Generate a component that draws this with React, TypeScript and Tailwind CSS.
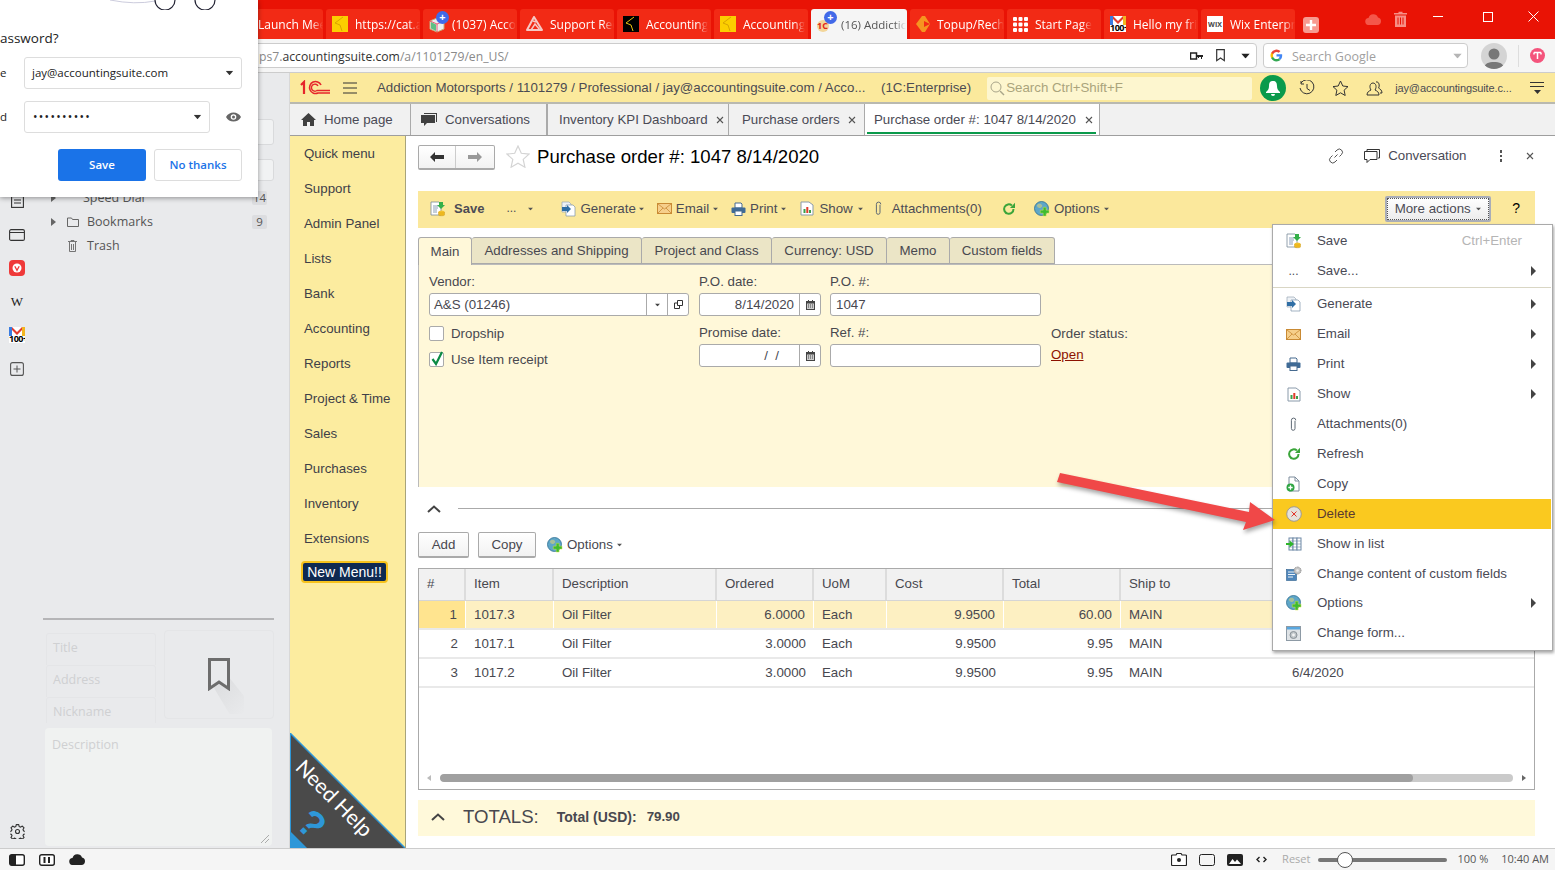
import React from "react";

const Tri = ({ c = "#555", cls = "" }: { c?: string; cls?: string }) => (
  <svg width="7" height="4" viewBox="0 0 7 4" className={cls}><path d="M0 0h7L3.5 4z" fill={c} /></svg>
);
const RTri = () => (
  <svg width="5" height="10" viewBox="0 0 5 10"><path d="M0 0l5 5-5 5z" fill="#444" /></svg>
);

const SaveIco = () => (
  <svg width="16" height="16" viewBox="0 0 16 16">
    <path d="M1 1h8l2 2v11H1z" fill="#fff" stroke="#7a8a9a" strokeWidth=".8" />
    <path d="M3 5h5M3 7h5M3 9h4M3 11h4" stroke="#6f88a8" strokeWidth=".8" />
    <path d="M9 1h4v3h2l-4 4-4-4h2z" fill="#35b04a" />
    <ellipse cx="11.5" cy="11" rx="3" ry="1.5" fill="#f2c230" />
    <path d="M8.5 11v3c0 1 6 1 6 0v-3" fill="#edb81f" stroke="#c4941a" strokeWidth=".4" />
  </svg>
);
const GenIco = () => (
  <svg width="16" height="16" viewBox="0 0 16 16">
    <path d="M1 1h7l2 2v8H1z" fill="#eef2f6" stroke="#9aa7b5" strokeWidth=".7" />
    <path d="M5 4h7l2 2v9H5z" fill="#fff" stroke="#7d93aa" strokeWidth=".7" />
    <path d="M1 6h5V4l4 4-4 4v-2H1z" fill="#2f6ea5" />
  </svg>
);
const MailIco = () => (
  <svg width="15" height="11" viewBox="0 0 15 11">
    <rect x=".5" y=".5" width="14" height="10" fill="#f6cf8b" stroke="#c98a34" />
    <path d="M1 1l6.5 5L14 1M1 10l5-5M14 10L9 5" stroke="#c98a34" strokeWidth=".8" fill="none" />
  </svg>
);
const PrintIco = () => (
  <svg width="15" height="14" viewBox="0 0 15 14">
    <path d="M4 1h6l1 1v4H4z" fill="#fff" stroke="#466a8f" />
    <rect x=".5" y="5.5" width="14" height="5.5" rx="1" fill="#3f6b96" />
    <rect x="4" y="9" width="7" height="4.5" fill="#fff" stroke="#466a8f" />
  </svg>
);
const ShowIco = () => (
  <svg width="14" height="15" viewBox="0 0 14 15">
    <path d="M1 1h8l4 3v10H1z" fill="#fff" stroke="#8a9aaa" />
    <rect x="3.5" y="8" width="2" height="4" fill="#3aa04a" />
    <rect x="6.3" y="6" width="2" height="6" fill="#e23b2a" />
    <rect x="9" y="9" width="2" height="3" fill="#3aa04a" />
  </svg>
);
const ClipIco = () => (
  <svg width="7" height="15" viewBox="0 0 7 15">
    <path d="M5.2 3.5v7.700a1.800 1.800 0 01-3.600 0V3a2.200 2.200 0 014.400 0" transform="translate(-.2 .3)" fill="none" stroke="#5f6a75" strokeWidth="1" />
  </svg>
);
const RefreshIco = () => (
  <svg width="14" height="14" viewBox="0 0 14 14">
    <path d="M11.5 7a4.700 4.700 0 11-1.600-3.500" fill="none" stroke="#3ba53a" strokeWidth="2" />
    <path d="M13 .8V6H8z" fill="#3ba53a" />
  </svg>
);
const GlobeIco = () => (
  <svg width="16" height="16" viewBox="0 0 16 16">
    <circle cx="7.5" cy="7.5" r="7" fill="#5ea6c8" stroke="#2f6f92" strokeWidth=".8" />
    <path d="M3 4c2-2 4-1 5 0s-1 3-2 3-3 0-3-3zM9 8c2 0 4 0 4 2s-3 3-4 2z" fill="#a7bf9a" />
    <path d="M10 7h3v3h3v3h-3v3h-3v-3H7v-3h3z" fill="#3dbb2f" stroke="#d8e44a" strokeWidth=".5" transform="translate(-.5 -.5) scale(.97)" />
  </svg>
);
const CopyIco = () => (
  <svg width="15" height="16" viewBox="0 0 15 16">
    <path d="M3 1h6l4 4v10H3z" fill="#fff" stroke="#7d8c9c" />
    <path d="M9 1v4h4" fill="none" stroke="#7d8c9c" />
    <circle cx="4.5" cy="11.5" r="4" fill="#2fa544" />
    <path d="M4.5 9.300v4.400M2.300 11.500h4.400" stroke="#fff" strokeWidth="1.300" />
  </svg>
);
const DelIco = () => (
  <svg width="16" height="16" viewBox="0 0 16 16">
    <circle cx="8" cy="8" r="7.300" fill="#e4e2dc" stroke="#a09a90" />
    <path d="M5.500 5.500l5 5m0-5l-5 5" stroke="#e2342a" strokeWidth="1" />
  </svg>
);
const ListIco = () => (
  <svg width="16" height="14" viewBox="0 0 16 14">
    <rect x="3" y="1" width="4" height="12" fill="#fff" stroke="#6d88a5" />
    <rect x="7" y="1" width="4" height="12" fill="#fff" stroke="#6d88a5" />
    <rect x="11" y="1" width="4" height="12" fill="#fff" stroke="#6d88a5" />
    <path d="M3 4h12M3 7h12M3 10h12" stroke="#6d88a5" strokeWidth=".6" />
    <path d="M0 6h3.500V3.500L8 7l-4.500 3.500V8H0z" fill="#2fb52a" />
  </svg>
);
const CfIco = () => (
  <svg width="16" height="15" viewBox="0 0 16 15">
    <rect x=".5" y="3.500" width="10" height="11" fill="#4f86bb" stroke="#2f5f8d" strokeWidth=".6" />
    <path d="M2 6h7M2 8.500h7M2 11h5" stroke="#fff" strokeWidth=".9" />
    <circle cx="11.500" cy="4.500" r="3.500" fill="#c5c5c5" stroke="#8a8a8a" strokeDasharray="1 .7" />
    <circle cx="11.500" cy="4.500" r="1.300" fill="#eee" />
  </svg>
);
const FormIco = () => (
  <svg width="15" height="15" viewBox="0 0 15 15">
    <rect x=".5" y=".5" width="14" height="14" fill="#dfe3e6" stroke="#8d9aa5" />
    <rect x="1" y="1" width="13" height="2.500" fill="#59a7df" />
    <circle cx="7.500" cy="9" r="3.500" fill="#bfc5c9" stroke="#8b9298" />
    <circle cx="7.500" cy="9" r="1.400" fill="#f3f3f3" />
  </svg>
);

const Badge = () => (
  <span className="absolute left-[7px] top-[-5px] w-[13px] h-[13px] rounded-full bg-[#4169e8] text-white text-[11px] leading-[12px] text-center font-bold">+</span>
);

const Fav = ({ kind }: { kind: string }) => {
  if (kind === "yellow" || kind === "black")
    return (
      <svg width="16" height="16" viewBox="0 0 16 16" className="shrink-0">
        <rect width="16" height="16" fill={kind === "yellow" ? "#fccf00" : "#000"} />
        <path d="M11 1L3 7l5 2 2 6" fill="none" stroke={kind === "yellow" ? "#d9a400" : "#e8c110"} strokeWidth="1" />
      </svg>
    );
  if (kind === "cube")
    return (
      <span className="relative inline-block w-[16px] h-[16px] shrink-0">
        <svg width="16" height="16" viewBox="0 0 16 16" className="mt-[1px]">
          <path d="M8 1l7 3v8l-7 3-7-3V4z" fill="#eee" stroke="#c9a87a" />
          <path d="M1 4l7 3 7-3M8 7v8" stroke="#e35" fill="none" strokeWidth=".8" />
          <path d="M2 5l5 2.500V14l-5-2.500z" fill="#5fbf83" />
        </svg>
        <Badge />
      </span>
    );
  if (kind === "support")
    return (
      <svg width="17" height="16" viewBox="0 0 17 16" className="shrink-0">
        <path d="M8 1l8 13H1z" fill="none" stroke="#f6c8c3" strokeWidth="2" strokeLinejoin="round" />
        <path d="M5 14l4-6 5 6M7 5l3 1" stroke="#f6c8c3" strokeWidth="1.500" fill="none" />
      </svg>
    );
  if (kind === "1c")
    return (
      <span className="relative inline-block w-[16px] h-[16px] shrink-0">
        <span className="absolute left-0 top-[4px] w-[12px] h-[12px] rounded-full bg-[#f3d69a]" />
        <span className="absolute left-0 top-[5px] text-[9px] font-bold text-[#e0281a] leading-none">1C</span>
        <Badge />
      </span>
    );
  if (kind === "top")
    return (
      <svg width="14" height="16" viewBox="0 0 14 16" className="shrink-0">
        <path d="M6 0h3l5 8-5 8H6L0 8z" fill="#f69420" />
        <path d="M14 8L8 5v6z" fill="#f22a15" />
      </svg>
    );
  if (kind === "grid")
    return (
      <svg width="15" height="15" viewBox="0 0 15 15" className="shrink-0">
        {[0, 5.500, 11].map((x) => [0, 5.500, 11].map((y) => <rect key={`${x}${y}`} x={x} y={y} width="4" height="4" rx="1" fill="#fff" />))}
      </svg>
    );
  if (kind === "gmail")
    return (
      <span className="relative inline-block w-[16px] h-[16px] bg-white shrink-0 overflow-hidden">
        <svg width="16" height="9" viewBox="0 0 16 9" className="absolute top-0 left-0">
          <rect width="3" height="9" fill="#3a7ce0" />
          <rect x="13" width="3" height="9" fill="#f2b61f" />
          <path d="M3 0l5 5 5-5v3L8 8 3 3z" fill="#e33b2e" />
        </svg>
        <span className="absolute left-0 top-[7px] text-[9px] font-bold text-black leading-none tracking-[-0.5px]">100+</span>
      </span>
    );
  return (
    <span className="inline-flex items-center justify-center w-[16px] h-[16px] bg-white text-[7px] font-bold text-[#444] shrink-0 leading-none">WIX</span>
  );
};

const tabs = [
  { k: "yellow", t: "Launch Mee" },
  { k: "yellow", t: "https://cat.a" },
  { k: "cube", t: "(1037) Acco" },
  { k: "support", t: "Support Rec" },
  { k: "black", t: "Accounting" },
  { k: "yellow", t: "Accounting" },
  { k: "1c", t: "(16) Addictic", active: true },
  { k: "top", t: "Topup/Rech" },
  { k: "grid", t: "Start Page" },
  { k: "gmail", t: "Hello my fri" },
  { k: "wix", t: "Wix Enterpr" },
];

const ChromeBar = () => (
  <div className="h-[39px] bg-[#e91305] flex items-end pl-[229px] shrink-0">
    <div className="flex gap-[3px]">
      {tabs.map((t, i) => (
        <div key={i} className={t.active
          ? "w-[96px] h-[30px] rounded-t-[3px] bg-[#f5f5f5] text-[#555] flex items-center pl-[6px] gap-[8px] text-[11.5px] overflow-hidden whitespace-nowrap"
          : "w-[94px] h-[30px] rounded-t-[3px] bg-[#f22a15] text-white flex items-center pl-[6px] gap-[7px] text-[12px] overflow-hidden whitespace-nowrap"}>
          <Fav kind={t.k} />
          <span className="pt-[2px] [mask-image:linear-gradient(90deg,#000_82%,transparent)] overflow-hidden">{t.t}</span>
        </div>
      ))}
    </div>
    <span className="ml-[8px] mb-[6px] w-[16px] h-[16px] rounded-[3px] bg-[#f79a90] text-white flex items-center justify-center">
      <svg width="10" height="10" viewBox="0 0 10 10"><path d="M5 0v10M0 5h10" stroke="#fff" strokeWidth="2.400" /></svg>
    </span>
    <div className="ml-[46px] mb-[10px] flex items-center h-[20px]">
      <svg width="16" height="11" viewBox="0 0 16 11"><path d="M4 11a3.500 3.500 0 01-.5-7A5 5 0 0113 3.500 3.800 3.800 0 0112.500 11z" fill="#f4574a" /></svg>
      <svg width="13" height="16" viewBox="0 0 13 16" className="ml-[13px]"><path d="M4.500 2V.8h4V2H13v1.500H0V2zM1 4.500h11V16H1z" fill="#f78f85" /><path d="M4 6.500v7M6.500 6.500v7M9 6.500v7" stroke="#e91305" /></svg>
    </div>
    <div className="ml-[26px] mb-[17px] flex items-center">
      <span className="w-[10px] h-[1px] bg-white" />
      <span className="ml-[40px] w-[10px] h-[10px] border border-white" />
      <svg width="11" height="11" viewBox="0 0 11 11" className="ml-[35px]"><path d="M.5.500l10 10m0-10l-10 10" stroke="#fff" /></svg>
    </div>
  </div>
);

const AddressBar = () => (
  <div className="h-[33px] bg-[#f5f5f5] flex items-center shrink-0">
    <div className="w-[1257px] h-[25px] bg-white border border-[#ccc] rounded-r-[4px] flex items-center pl-[258px] text-[12.2px] shrink-0">
      <span className="text-[#8a8a8a] pt-[4px]">ps7.</span>
      <span className="text-[#333] pt-[4px]">accountingsuite.com</span>
      <span className="text-[#8a8a8a] pt-[4px]">/a/1101279/en_US/</span>
      <div className="ml-auto flex items-center pr-[7px]">
        <svg width="13" height="8" viewBox="0 0 13 8"><rect x=".5" y="1" width="6" height="6" fill="#fff" stroke="#222" strokeWidth="1.500" /><path d="M7 3h6v2h-1v2h-1V5H9v1H8V5H7z" fill="#222" /></svg>
        <svg width="9" height="13" viewBox="0 0 9 13" className="ml-[13px]"><path d="M.7.700h7.600v11L4.500 9 .7 11.700z" fill="none" stroke="#333" strokeWidth="1.200" /></svg>
        <Tri c="#222" cls="ml-[17px] scale-125" />
      </div>
    </div>
    <div className="ml-[6px] w-[205px] h-[25px] bg-white border border-[#ccc] rounded-[4px] flex items-center pl-[6px] text-[12.5px] text-[#9f9f9f] shrink-0">
      <svg width="13" height="13" viewBox="0 0 48 48">
        <path fill="#4285F4" d="M45 24c0-1.600-.1-3-.4-4.500H24v8.500h11.800c-.5 2.700-2 5-4.400 6.600l7 5.400C42.500 36 45 30.500 45 24z" />
        <path fill="#34A853" d="M24 46c5.900 0 10.900-2 14.500-5.400l-7-5.400c-2 1.300-4.500 2.100-7.500 2.100-5.700 0-10.600-3.900-12.300-9H4.400v5.600C8 41 15.500 46 24 46z" />
        <path fill="#FBBC05" d="M11.700 28.300c-.9-2.700-.9-5.800 0-8.500v-5.600H4.400a22 22 0 000 19.700z" />
        <path fill="#EA4335" d="M24 10.700c3.200 0 6.100 1.100 8.400 3.300l6.200-6.200A22 22 0 004.400 14.200l7.300 5.600c1.700-5.100 6.600-9.100 12.300-9.100z" />
      </svg>
      <span className="ml-[9px] pt-[4px]">Search Google</span>
      <Tri c="#b5b5b5" cls="ml-auto mr-[6px] scale-125" />
    </div>
    <div className="ml-[13px] w-[26px] h-[26px] rounded-full bg-[#d4d4d4] overflow-hidden flex items-end justify-center shrink-0">
      <svg width="20" height="22" viewBox="0 0 20 22"><circle cx="10" cy="7" r="5.500" fill="#777" /><path d="M0 22c0-6 5-7 10-7s10 1 10 7z" fill="#777" /></svg>
    </div>
    <span className="ml-[11px] w-[1px] h-[22px] bg-[#ddd]" />
    <span className="ml-[11px] w-[15px] h-[15px] rounded-full bg-[#f4547c] flex items-center justify-center">
      <svg width="9" height="9" viewBox="0 0 9 9"><path d="M1 1.500h7M4.500 1.500V8M1 1.500v2M8 1.500v2" stroke="#fff" strokeWidth="1.500" fill="none" /></svg>
    </span>
  </div>
);

const RailSlot = ({ children }: { children: React.ReactNode }) => (
  <div className="h-[33.4px] flex items-center justify-center">{children}</div>
);

const FieldCell = ({ t }: { t: string }) => (
  <div className="h-[32px] border-t border-l border-r border-[#e4e5e7] rounded-t-[3px] pl-[6px] pt-[5px] text-[12.5px] text-[#cfd0d2] last:h-[26px] last:overflow-hidden">{t}</div>
);

const RTriSm = () => (
  <svg width="5" height="8" viewBox="0 0 5 8" className="shrink-0"><path d="M0 0l5 4-5 4z" fill="#666" /></svg>
);

const LeftPanel = () => (
  <div className="w-[290px] shrink-0 bg-[#e9eaec] border-r border-[#d8d8d8] flex font-['Open_Sans',sans-serif]">
    <div className="w-[34px] flex flex-col pt-[112px] pb-[9px]">
      <RailSlot>
        <svg width="13" height="12" viewBox="0 0 13 12"><rect x=".6" y=".6" width="11.800" height="10.800" fill="none" stroke="#333" strokeWidth="1.100" /><path d="M3 4h7M3 7h7" stroke="#333" /></svg>
      </RailSlot>
      <RailSlot>
        <svg width="16" height="12" viewBox="0 0 16 12"><rect x=".6" y=".6" width="14.800" height="10.800" rx="1.500" fill="none" stroke="#333" strokeWidth="1.100" /><path d="M1 3.500h14" stroke="#333" /></svg>
      </RailSlot>
      <RailSlot>
        <span className="w-[16px] h-[16px] rounded-[4px] bg-[#ef3939] flex items-center justify-center">
          <svg width="10" height="10" viewBox="0 0 10 10"><circle cx="5" cy="5" r="4.500" fill="#fff" /><path d="M2.800 3.300L5 7.300l2.200-4" fill="none" stroke="#ef3939" strokeWidth="1.300" /></svg>
        </span>
      </RailSlot>
      <RailSlot><span className="font-['Liberation_Serif',serif] text-[13px] text-[#222] leading-none">W</span></RailSlot>
      <RailSlot><Fav kind="gmail" /></RailSlot>
      <RailSlot>
        <svg width="14" height="14" viewBox="0 0 14 14"><rect x=".6" y=".6" width="12.800" height="12.800" rx="2" fill="none" stroke="#555" strokeWidth="1.100" /><path d="M7 3.500v7M3.500 7h7" stroke="#555" /></svg>
      </RailSlot>
      <div className="mt-auto flex justify-center">
        <svg width="15" height="15" viewBox="0 0 24 24" fill="none" stroke="#333" strokeWidth="1.800" strokeLinejoin="round"><circle cx="12" cy="12" r="3.200" /><path d="M10 2h4l.6 3 2.500 1 2.600-1.700 2.800 2.800-1.700 2.600 1 2.500 3 .6v4l-3 .6-1 2.500 1.700 2.600-2.800 2.800-2.600-1.700-2.500 1-.6 3h-4l-.6-3-2.500-1-2.600 1.700-2.800-2.800 1.700-2.600-1-2.500-3-.6v-4l3-.6 1-2.500-1.700-2.600 2.800-2.800 2.600 1.700 2.500-1z" transform="translate(0 -1)" /></svg>
      </div>
    </div>
    <div className="w-[231px] ml-[9px] flex flex-col pt-[46px]">
      <div className="h-[26px] bg-[#f1f2f3] border border-[#d9dadc] rounded-[3px]" />
      <div className="mt-[14px] h-[22px] bg-[#f1f2f3] border border-[#d9dadc] rounded-[3px]" />
      <div className="mt-[5px] text-[12.5px] text-[#555]">
        <div className="h-[24px] flex items-center pl-[8px]">
          <RTriSm /><span className="ml-[27px]">Speed Dial</span>
          <span className="ml-auto mr-[7px] w-[15px] h-[14px] rounded-[2px] bg-[#dcdde0] text-[11.5px] text-center leading-[14px]">14</span>
        </div>
        <div className="h-[24px] flex items-center pl-[8px]">
          <RTriSm />
          <svg width="12" height="10" viewBox="0 0 12 10" className="ml-[11px]"><path d="M.5 1h4l1 1.500h6v7H.5z" fill="none" stroke="#666" /></svg>
          <span className="ml-[8px]">Bookmarks</span>
          <span className="ml-auto mr-[7px] w-[15px] h-[14px] rounded-[2px] bg-[#dcdde0] text-[11.5px] text-center leading-[14px]">9</span>
        </div>
        <div className="h-[24px] flex items-center pl-[25px]">
          <svg width="9" height="12" viewBox="0 0 9 12"><path d="M1.500 2v9.500h6V2M0 1.500h9M3 1V.5h3V1M3.500 4v6M5.500 4v6" fill="none" stroke="#666" strokeWidth=".9" /></svg>
          <span className="ml-[10px]">Trash</span>
        </div>
      </div>
      <div className="mt-auto">
        <div className="h-[2px] bg-[#b5b5b7]" />
        <div className="flex mt-[10px] h-[89px]">
          <div className="w-[110px] ml-[3px] pt-[3px]">
            <FieldCell t="Title" /><FieldCell t="Address" /><FieldCell t="Nickname" />
          </div>
          <div className="ml-[8px] w-[110px] h-[89px] border border-[#e4e5e7] rounded-[4px] flex items-center justify-center overflow-hidden">
            <span className="relative w-[22px] h-[33px] flex">
              <span className="absolute left-[0px] top-[20px] w-[36px] h-[36px] bg-gradient-to-br from-[#dadbdd] to-[#e9eaec] [clip-path:polygon(0_0,60%_0,100%_50%,100%_100%,60%_100%)]" />
              <svg width="22" height="33" viewBox="0 0 22 33" className="relative"><path d="M1.500 1.500h19v29L11 24l-9.500 6.500z" fill="#e9eaec" stroke="#6d6d6d" strokeWidth="3" /></svg>
            </span>
          </div>
        </div>
        <div className="relative ml-[2px] w-[227px] h-[118px] mt-[9px] mb-[2px] bg-[#f0f2f1] rounded-[4px] pl-[7px] pt-[8px] text-[12.5px] text-[#cfd0d2]">
          Description
          <svg width="10" height="10" viewBox="0 0 10 10" className="absolute right-[2px] bottom-[2px]"><path d="M1 9l8-8M5 9l4-4" stroke="#999" strokeWidth=".8" /></svg>
        </div>
      </div>
    </div>
  </div>
);

const AppHeader = () => (
  <div className="h-[31px] pt-[1px] bg-[#fbe99c] border-b-2 border-[#b9b9b0] flex items-center text-[13.3px] text-[#4b4b52] shrink-0 whitespace-nowrap">
    <svg width="30" height="16" viewBox="0 0 30 16" className="ml-[10px] shrink-0">
      <path d="M1 5l3-3v12" fill="none" stroke="#e6262b" strokeWidth="2.200" />
      <path d="M21 5a6 6 0 10-3 8h12" fill="none" stroke="#e6262b" strokeWidth="1.600" />
      <path d="M18 6a3.500 3.500 0 10-1 4.500h13" fill="none" stroke="#e6262b" strokeWidth="1.400" />
    </svg>
    <svg width="14" height="12" viewBox="0 0 14 12" className="ml-[13px] shrink-0"><path d="M0 1h14M0 6h14M0 11h14" stroke="#333" /></svg>
    <span className="ml-[20px] w-[491px] overflow-hidden">Addiction Motorsports / 1101279 / Professional / jay@accountingsuite.com / Acco...</span>
    <span className="ml-[13px]">(1C:Enterprise)</span>
    <div className="ml-[16px] w-[265px] h-[23px] bg-[#fdf6cf] flex items-center pl-[3px] text-[#aaa47c] rounded-[2px]">
      <svg width="15" height="15" viewBox="0 0 15 15"><circle cx="6" cy="6" r="5" fill="none" stroke="#a9a58a" /><path d="M10 10l4 4" stroke="#a9a58a" strokeWidth="1.500" /></svg>
      <span className="ml-[1px]">Search Ctrl+Shift+F</span>
    </div>
    <span className="ml-[8px] w-[26px] h-[26px] rounded-full bg-[#0a9a4b] flex items-center justify-center shrink-0">
      <svg width="14" height="15" viewBox="0 0 14 15"><path d="M7 0c3 0 4 2 4 5 0 3 1 4 3 6v1H0v-1c2-2 3-3 3-6 0-3 1-5 4-5zM5 13h4a2 2 0 01-4 0z" fill="#fff" /></svg>
    </span>
    <svg width="16" height="16" viewBox="0 0 16 16" className="ml-[13px] shrink-0" fill="none" stroke="#333"><path d="M2 3a7 7 0 11-1 5" /><path d="M2 1v3h3M8 4v4.500l3 2" /></svg>
    <svg width="17" height="16" viewBox="0 0 17 16" className="ml-[17px] shrink-0"><path d="M8.500 1l2.300 5 5.200.6-3.900 3.600 1.100 5.300-4.700-2.700-4.700 2.700 1.100-5.300L1 6.600 6.200 6z" fill="none" stroke="#333" /></svg>
    <svg width="17" height="15" viewBox="0 0 17 15" className="ml-[17px] shrink-0" fill="none" stroke="#333"><path d="M1 14c0-3 2-4 4-5-2-3-1-7 2-7s4 4 2 7c2 1 4 2 4 5zM10 1c3-1 4 4 2.500 6 1.500 1 3.500 2 3.500 5h-2" /></svg>
    <span className="ml-[12px] text-[11px] tracking-[-0.12px] w-[118px] overflow-hidden">jay@accountingsuite.c...</span>
    <span className="ml-[17px] flex flex-col items-center gap-[3px] shrink-0">
      <span className="w-[14px] h-[1px] bg-[#333]" /><span className="w-[14px] h-[1px] bg-[#333]" /><Tri c="#333" />
    </span>
  </div>
);

const X = ({ cls = "" }: { cls?: string }) => (
  <svg width="8" height="8" viewBox="0 0 8 8" className={cls}><path d="M1 1l6 6m0-6L1 7" stroke="#555" strokeWidth="1.100" /></svg>
);

const AppTabs = () => (
  <div className="h-[32px] bg-[#f1f1f1] border-b border-[#9e9e9e] flex text-[13.3px] text-[#4a4a55] shrink-0 whitespace-nowrap">
    <div className="w-[121px] flex items-center border-r border-[#aaa] pl-[11px]">
      <svg width="15" height="13" viewBox="0 0 15 13"><path d="M7.500 0L15 7h-2v6H9V9H6v4H2V7H0z" fill="#404040" /></svg>
      <span className="ml-[8px]">Home page</span>
    </div>
    <div className="w-[137px] flex items-center border-r-2 border-[#aaa] pl-[10px]">
      <svg width="16" height="14" viewBox="0 0 16 14"><path d="M3 0h13v9h-1V1H3zM0 2h14v8H6l-3 3v-3H0z" fill="#404040" /></svg>
      <span className="ml-[8px]">Conversations</span>
    </div>
    <div className="w-[181px] flex items-center border-r border-[#aaa] pl-[11px]">
      Inventory KPI Dashboard<X cls="ml-[8px]" />
    </div>
    <div className="w-[136px] flex items-center border-r border-[#aaa] pl-[13px]">
      Purchase orders<X cls="ml-[8px]" />
    </div>
    <div className="w-[235px] flex items-center border-r border-[#aaa] bg-white pl-[9px] relative">
      Purchase order #: 1047 8/14/2020<X cls="ml-[9px]" />
      <span className="absolute left-[2px] right-[3px] bottom-[1px] h-[2px] bg-[#0a9a4b]" />
    </div>
  </div>
);

const nav = ["Quick menu", "Support", "Admin Panel", "Lists", "Bank", "Accounting", "Reports", "Project & Time", "Sales", "Purchases", "Inventory", "Extensions"];

const Sidebar = () => (
  <div className="relative w-[116px] bg-[#fcec9f] border-r border-[#a8a47a] shrink-0 text-[13.3px] text-[#3f3f48] overflow-hidden">
    <div className="pl-[14px]">
      {nav.map((n) => (
        <div key={n} className="h-[35px] flex items-center">{n}</div>
      ))}
    </div>
    <div className="ml-[11px] mt-[5px] w-[87px] h-[22px] bg-[#0f2a52] border-2 border-[#f6c21c] rounded-[4px] text-white flex items-center justify-center text-[14px] leading-none">New Menu!!</div>
    <div className="absolute left-0 bottom-0 w-[115px] h-[115px]">
      <svg width="115" height="115" viewBox="0 0 115 115" className="absolute inset-0">
        <path d="M0 0L115 115H0z" fill="#4a4a4a" />
        <path d="M0 0L115 115" stroke="#2e97d8" strokeWidth="1.500" />
        <path d="M0 0V115" stroke="#2e97d8" strokeWidth="2" />
        <path d="M0 98L17 115H0z" fill="#2e97d8" />
      </svg>
      <span className="absolute left-[-5px] top-[54px] w-[100px] text-center rotate-45 text-white text-[21px] leading-none font-['Lato',sans-serif] whitespace-nowrap">Need Help</span>
      <span className="absolute left-[10px] top-[72px] rotate-45 text-[#2e97d8] text-[38px] font-bold leading-none">?</span>
    </div>
  </div>
);

const TB = ({ icon, label, cls, caret = true }: { icon: React.ReactNode; label: string; cls: string; caret?: boolean }) => (
  <div className={`flex items-center ${cls}`}>
    {icon}
    <span>{label}</span>
    {caret && <Tri cls="-ml-[1px] scale-75" c="#555" />}
  </div>
);

const Toolbar = () => (
  <div className="h-[37px] bg-[#fbe89c] flex items-center pb-[2px] text-[13.3px] text-[#4c4c55] whitespace-nowrap shrink-0">
    <div className="ml-[12px] flex items-center gap-[8px]"><SaveIco /><span className="font-bold text-[13px]">Save</span></div>
    <span className="ml-[22px] text-[12px] -mt-[1px]">...</span>
    <Tri cls="ml-[11px] scale-75" c="#555" />
    <TB cls="ml-[27px] gap-[3px]" icon={<GenIco />} label="Generate" />
    <TB cls="ml-[12px] gap-[4px]" icon={<MailIco />} label="Email" />
    <TB cls="ml-[12px] gap-[4px]" icon={<PrintIco />} label="Print" />
    <TB cls="ml-[13px] gap-[5px]" icon={<ShowIco />} label="Show" />
    <TB cls="ml-[11px] gap-[10px]" icon={<ClipIco />} label="Attachments(0)" caret={false} />
    <span className="ml-[20px]"><RefreshIco /></span>
    <TB cls="ml-[18px] gap-[4px]" icon={<GlobeIco />} label="Options" />
    <div className="ml-auto w-[106px] h-[26px] border-2 border-[#a9adb8] rounded-[2px] bg-gradient-to-b from-white to-[#ececec] flex items-center justify-center outline-1 outline-dotted -outline-offset-3 outline-[#555]">
      More actions<Tri cls="ml-[4px] scale-75" c="#555" />
    </div>
    <span className="ml-[21px] mr-[15px] text-black text-[14px]">?</span>
  </div>
);

const tabNames: [string, string][] = [["Main", "w-[54px]"], ["Addresses and Shipping", "w-[170px]"], ["Project and Class", "w-[130px]"], ["Currency: USD", "w-[115px]"], ["Memo", "w-[63px]"], ["Custom fields", "w-[105px]"]];

const Input = ({ cls, children }: { cls: string; children?: React.ReactNode }) => (
  <div className={`h-[23px] bg-white border border-[#aaa] rounded-[3px] flex items-center ${cls}`}>{children}</div>
);

const Cal = () => (
  <span className="w-[21px] h-full border-l border-[#aaa] flex items-center justify-center">
    <svg width="9" height="10" viewBox="0 0 9 10"><path d="M2 0h1v1h3V0h1v1h2v9H0V1h2z" fill="#444" /><rect x="1" y="3.500" width="7" height="5.500" fill="#ccc" /><path d="M2 5h5M2 7h5" stroke="#444" strokeDasharray="1 1" /></svg>
  </span>
);

const Form = () => (
  <>
    <div className="mt-[9px] h-[28px] flex text-[13.3px] text-[#48484f] relative z-10 shrink-0">
      {tabNames.map(([n, w], i) => (
        <div key={n} className={i === 0
          ? `${w} h-[28px] bg-[#fff8d9] border border-b-0 border-[#aaa] rounded-t-[3px] flex items-center justify-center`
          : `${w} h-[27px] bg-[#ebe5c6] border border-l-0 border-[#aaa] rounded-t-[3px] flex items-center justify-center`}>{n}</div>
      ))}
    </div>
    <div className="h-[223px] -mt-[1px] bg-[#fff8d9] border-l border-t border-[#bbb] flex pl-[10px] pt-[8px] text-[13.3px] text-[#48484f] shrink-0">
      <div className="w-[260px]">
        <div className="h-[20px] leading-[17px]">Vendor:</div>
        <Input cls="w-[260px]">
          <span className="ml-[4px] flex-1">A&amp;S (01246)</span>
          <span className="w-[21px] h-full border-l border-[#aaa] flex items-center justify-center"><Tri c="#444" cls="scale-75" /></span>
          <span className="w-[21px] h-full border-l border-[#aaa] flex items-center justify-center">
            <svg width="9" height="9" viewBox="0 0 9 9" fill="none" stroke="#333"><path d="M3.500 5.500V.5h5v5zM3 3H.5v5.500h5V6" /></svg>
          </span>
        </Input>
        <div className="mt-[8px] h-[19px] flex items-center">
          <span className="w-[15px] h-[15px] bg-white border border-[#aaa] rounded-[2px]" />
          <span className="ml-[7px]">Dropship</span>
        </div>
        <div className="mt-[7px] h-[19px] flex items-center">
          <span className="w-[15px] h-[15px] bg-white border border-[#aaa] rounded-[2px] relative">
            <svg width="15" height="15" viewBox="0 0 15 15" className="absolute left-0 top-[-2px]"><path d="M2.500 8l3.500 5 6-12" fill="none" stroke="#0b8b45" strokeWidth="2.200" /></svg>
          </span>
          <span className="ml-[7px]">Use Item receipt</span>
        </div>
      </div>
      <div className="ml-[10px] w-[122px]">
        <div className="h-[20px] leading-[17px]">P.O. date:</div>
        <Input cls="w-[122px]"><span className="flex-1 text-right pr-[5px]">8/14/2020</span><Cal /></Input>
        <div className="mt-[8px] h-[20px] leading-[17px]">Promise date:</div>
        <Input cls="w-[122px]"><span className="flex-1 text-right pr-[20px]">/ &nbsp;/</span><Cal /></Input>
      </div>
      <div className="ml-[9px] w-[211px]">
        <div className="h-[20px] leading-[17px]">P.O. #:</div>
        <Input cls="w-[211px] pl-[5px]">1047</Input>
        <div className="mt-[8px] h-[20px] leading-[17px]">Ref. #:</div>
        <Input cls="w-[211px]" />
      </div>
      <div className="ml-[10px] pt-[51px]">
        <div className="h-[20px] leading-[20px]">Order status:</div>
        <div className="underline text-[#8c1100] mt-[1px]">Open</div>
      </div>
    </div>
    <div className="h-[45px] flex items-center pl-[9px] pb-[2px] shrink-0">
      <svg width="14" height="8" viewBox="0 0 14 8"><path d="M1 7l6-5.500L13 7" fill="none" stroke="#444" strokeWidth="2" /></svg>
      <span className="ml-[17px] flex-1 h-[1px] bg-[#aaa]" />
    </div>
    <div className="h-[26px] flex items-center text-[13.3px] text-[#48484f] shrink-0">
      <div className="w-[51px] h-full border border-[#aaa] border-b-2 rounded-[2px] bg-gradient-to-b from-white to-[#f2f2f2] flex items-center justify-center">Add</div>
      <div className="ml-[9px] w-[58px] h-full border border-[#aaa] border-b-2 rounded-[2px] bg-gradient-to-b from-white to-[#f2f2f2] flex items-center justify-center">Copy</div>
      <span className="ml-[11px]"><GlobeIco /></span>
      <span className="ml-[4px]">Options</span>
      <Tri cls="ml-[3px] scale-75" c="#555" />
    </div>
  </>
);

const cols = ["w-[47px]", "w-[88px]", "w-[163px]", "w-[97px]", "w-[73px]", "w-[117px]", "w-[117px]", "w-[163px]", "flex-1"];
const heads = ["#", "Item", "Description", "Ordered", "UoM", "Cost", "Total", "Ship to", ""];
const rows = [
  ["1", "1017.3", "Oil Filter", "6.0000", "Each", "9.9500", "60.00", "MAIN", ""],
  ["2", "1017.1", "Oil Filter", "3.0000", "Each", "9.9500", "9.95", "MAIN", ""],
  ["3", "1017.2", "Oil Filter", "3.0000", "Each", "9.9500", "9.95", "MAIN", "6/4/2020"],
];
const right = [true, false, false, true, false, true, true, false, false];

const Table = () => (
  <div className="mt-[10px] h-[222px] border border-[#aaa] flex flex-col text-[13.3px] text-[#48484f] shrink-0 relative">
    <div className="h-[32px] flex bg-[#f1f1f1] border-b border-[#d5d5d5]">
      {heads.map((h, i) => (
        <div key={i} className={`${cols[i]} border-r-2 border-[#dcdcdc] flex items-center pl-[8px] pb-[1px] last:border-r-0`}>{h}</div>
      ))}
    </div>
    {rows.map((r, ri) => (
      <div key={ri} className={ri === 0 ? "h-[29px] flex bg-[#fdf0c2] border-b-2 border-[#e9e9e9]" : "h-[29px] flex border-b-2 border-[#e9e9e9]"}>
        {r.map((c, i) => (
          <div key={i} className={`${cols[i]} flex items-center ${right[i] ? "justify-end pr-[8px]" : "pl-[8px]"} ${ri === 0 && i < 8 ? "border-r border-white" : ""} ${ri === 0 && i === 0 ? "bg-[#ffe48f]" : ""}`}>{c}</div>
        ))}
      </div>
    ))}
    <div className="absolute left-[8px] right-[8px] bottom-[7px] h-[8px] flex items-center">
      <span className="w-0 h-0 border-y-[3px] border-y-transparent border-r-[4px] border-r-[#bbb]" />
      <div className="ml-[9px] flex-1 h-[8px] rounded-full bg-[#cacaca] overflow-hidden">
        <div className="w-[973px] h-full bg-[#a0a0a0] rounded-full" />
      </div>
      <span className="ml-[9px] w-0 h-0 border-y-[3px] border-y-transparent border-l-[4px] border-l-[#666]" />
    </div>
  </div>
);

const Totals = () => (
  <div className="mt-[10px] h-[36px] bg-[#fff9da] flex items-center pb-[2px] text-[#48484f] shrink-0">
    <svg width="14" height="8" viewBox="0 0 14 8" className="ml-[13px]"><path d="M1 7l6-5.500L13 7" fill="none" stroke="#444" strokeWidth="2" /></svg>
    <span className="ml-[18px] text-[18.6px]">TOTALS:</span>
    <span className="ml-[18px] text-[14px] font-bold">Total (USD):</span>
    <span className="ml-[10px] text-[13.3px] font-bold">79.90</span>
  </div>
);

const Title = () => (
  <div className="h-[55px] flex items-start pt-[9px] shrink-0">
    <div className="flex w-[77px] h-[25px] border border-[#aaa] border-b-2 rounded-[2px] bg-gradient-to-b from-white to-[#f2f2f2]">
      <span className="w-[37px] border-r border-[#ccc] flex items-center justify-center">
        <svg width="14" height="10" viewBox="0 0 14 10"><path d="M0 5l5-5v3h9v4H5v3z" fill="#333" /></svg>
      </span>
      <span className="flex-1 flex items-center justify-center">
        <svg width="14" height="10" viewBox="0 0 14 10"><path d="M14 5L9 0v3H0v4h9v3z" fill="#999" /></svg>
      </span>
    </div>
    <svg width="24" height="23" viewBox="0 0 24 23" className="ml-[11px]"><path d="M12 1l3.300 7.300 7.700.8-5.800 5.300 1.700 7.800-6.900-4-6.900 4 1.700-7.800L1 9.100l7.700-.8z" fill="none" stroke="#d4d4d4" strokeWidth="1.200" /></svg>
    <span className="ml-[7px] text-[18.6px] leading-[24px] text-black whitespace-nowrap">Purchase order #: 1047 8/14/2020</span>
    <div className="ml-auto flex items-center h-[24px] pb-[2px] text-[13.3px] text-[#4a4a55]">
      <svg width="16" height="16" viewBox="0 0 16 16" fill="none" stroke="#555"><path d="M6.500 9.500l3-3M7 4l2-2a3 3 0 014.500 4.500l-2 2M9 12l-2 2a3 3 0 01-4.500-4.500l2-2" /></svg>
      <svg width="16" height="15" viewBox="0 0 16 15" className="ml-[20px]" fill="none" stroke="#333"><path d="M3 2.500V.5h12.500v8.500H14M.5 2.500h12.500v8H6l-3 3v-3H.5z" /></svg>
      <span className="ml-[8px]">Conversation</span>
      <span className="ml-[33px] flex flex-col gap-[2px]"><i className="w-[2.5px] h-[2.5px] bg-[#555] block" /><i className="w-[2.5px] h-[2.5px] bg-[#555] block" /><i className="w-[2.5px] h-[2.5px] bg-[#555] block" /></span>
      <X cls="ml-[24px] mr-[1px]" />
    </div>
  </div>
);

const menu: { label: string; icon?: React.ReactNode; sub?: boolean; hot?: boolean; short?: string; h: string }[] = [
  { label: "Save", icon: <SaveIco />, short: "Ctrl+Enter", h: "h-[30px]" },
  { label: "Save...", icon: <span className="text-[12px]">...</span>, sub: true, h: "h-[30px]" },
  { label: "Generate", icon: <GenIco />, sub: true, h: "h-[30px]" },
  { label: "Email", icon: <MailIco />, sub: true, h: "h-[30px]" },
  { label: "Print", icon: <PrintIco />, sub: true, h: "h-[30px]" },
  { label: "Show", icon: <ShowIco />, sub: true, h: "h-[30px]" },
  { label: "Attachments(0)", icon: <ClipIco />, h: "h-[30px]" },
  { label: "Refresh", icon: <RefreshIco />, h: "h-[30px]" },
  { label: "Copy", icon: <CopyIco />, h: "h-[30px]" },
  { label: "Delete", icon: <DelIco />, hot: true, h: "h-[30px]" },
  { label: "Show in list", icon: <ListIco />, h: "h-[30px]" },
  { label: "Change content of custom fields", icon: <CfIco />, h: "h-[29px]" },
  { label: "Options", icon: <GlobeIco />, sub: true, h: "h-[30px]" },
  { label: "Change form...", icon: <FormIco />, h: "h-[30px]" },
];

const Menu = () => (
  <div className="absolute left-[1272px] top-[224px] w-[281px] h-[427px] bg-white border border-[#aaa] shadow-[1px_2px_3px_rgba(0,0,0,0.35)] pt-[1px] text-[13.3px] text-[#4a4a55] z-30 font-['Liberation_Sans',sans-serif]">
    {menu.map((m, i) => (
      <React.Fragment key={m.label}>
        <div className={`${m.h} flex items-center ${m.hot ? "bg-[#fac91f] text-[#5a3a30] w-[278px]" : ""}`}>
          <span className="w-[44px] flex justify-center shrink-0 pr-[3px]">{m.icon}</span>
          <span>{m.label}</span>
          {m.short && <span className="ml-auto mr-[30px] text-[#b5b5b5]">{m.short}</span>}
          {m.sub && <span className="ml-auto mr-[16px] flex"><RTri /></span>}
        </div>
        {i === 1 && <div className="h-[3px] -mt-[1px] mb-[1px] border-b border-[#d9d6c4] w-[278px]" />}
      </React.Fragment>
    ))}
  </div>
);

const Arrow = () => (
  <svg width="230" height="70" viewBox="0 0 230 70" className="absolute left-[1052px] top-[468px] z-40 drop-shadow-[1px_3px_2px_rgba(0,0,0,0.35)]">
    <path d="M8 5L197 44 198 34 223 52 191 62 194 54 5 14z" fill="#f04848" />
  </svg>
);

const Popup = () => (
  <div className="absolute left-0 top-0 w-[258px] h-[197px] bg-white shadow-[0_1px_5px_rgba(0,0,0,0.4)] z-50 font-['Open_Sans',sans-serif] text-[#222]">
    <svg width="130" height="10" viewBox="0 0 130 10" className="absolute left-[100px] top-0">
      <path d="M10 0q25 5 45 1" fill="none" stroke="#ccd" />
      <path d="M55 0a10 10 0 0020 0M95 0a10 10 0 0020 0" fill="none" stroke="#223" strokeWidth="1.200" />
    </svg>
    <span className="absolute left-0 top-[28px] text-[13.5px] leading-[20px]">assword?</span>
    <span className="absolute left-0 top-[65px] text-[11.5px] leading-[16px]">e</span>
    <span className="absolute left-0 top-[109px] text-[11.5px] leading-[16px]">d</span>
    <div className="absolute left-[24px] top-[57px] w-[218px] h-[32px] border border-[#ddd] rounded-[3px] flex items-center pl-[7px] text-[11.5px]">
      jay@accountingsuite.com<Tri c="#333" cls="ml-auto mr-[8px] scale-110" />
    </div>
    <div className="absolute left-[24px] top-[101px] w-[186px] h-[32px] border border-[#ddd] rounded-[3px] flex items-center pl-[8px] text-[12px] tracking-[1.3px]">
      ••••••••••<Tri c="#333" cls="ml-auto mr-[8px] scale-110" />
    </div>
    <svg width="15" height="10" viewBox="0 0 15 10" className="absolute left-[226px] top-[112px]"><path d="M0 5c3-6 12-6 15 0-3 6-12 6-15 0z" fill="#666" /><circle cx="7.500" cy="5" r="2.800" fill="#fff" /><circle cx="7.500" cy="5" r="1.500" fill="#666" /></svg>
    <div className="absolute left-[58px] top-[149px] w-[88px] h-[32px] bg-[#1a73e8] rounded-[3px] text-white text-[11.5px] font-semibold flex items-center justify-center">Save</div>
    <div className="absolute left-[154px] top-[149px] w-[88px] h-[32px] border border-[#ddd] rounded-[3px] text-[#1a73e8] text-[11.5px] font-semibold flex items-center justify-center">No thanks</div>
  </div>
);

const Status = () => (
  <div className="h-[22px] bg-[#f5f5f5] border-t border-[#ccc] flex items-center text-[11px] text-[#555] shrink-0 font-['Open_Sans',sans-serif] whitespace-nowrap">
    <svg width="16" height="12" viewBox="0 0 16 12" className="ml-[9px]"><rect x=".7" y=".7" width="14.600" height="10.600" rx="2" fill="#fff" stroke="#222" strokeWidth="1.400" /><rect x="1" y="1" width="6" height="10" fill="#222" /></svg>
    <svg width="16" height="12" viewBox="0 0 16 12" className="ml-[14px]"><rect x=".7" y=".7" width="14.600" height="10.600" rx="2" fill="#fff" stroke="#222" strokeWidth="1.400" /><path d="M5.500 3v6M10 3v6" stroke="#222" strokeWidth="2" /></svg>
    <svg width="16" height="11" viewBox="0 0 16 11" className="ml-[14px]"><path d="M4 11a3.500 3.500 0 01-.5-7A5 5 0 0113 3.500 3.800 3.800 0 0112.500 11z" fill="#222" /></svg>
    <div className="ml-auto flex items-center">
      <svg width="16" height="13" viewBox="0 0 16 13"><path d="M5 2l1-1.500h4L11 2h3.500a1 1 0 011 1v8.500a1 1 0 01-1 1h-13a1 1 0 01-1-1V3a1 1 0 011-1z" fill="#fff" stroke="#222" strokeWidth="1.200" /><circle cx="8" cy="7" r="2" fill="#222" /></svg>
      <span className="ml-[12px] w-[16px] h-[12px] border-[1.5px] border-[#222] rounded-[2.5px]" />
      <svg width="16" height="12" viewBox="0 0 16 12" className="ml-[12px]"><rect width="16" height="12" rx="2" fill="#222" /><path d="M2 10l3.500-5 2.500 3 2-2.500L14 10z" fill="#fff" /></svg>
      <svg width="11" height="7" viewBox="0 0 11 7" className="ml-[13px]"><path d="M3.500 1L1 3.500 3.500 6M7.500 1L10 3.500 7.500 6" fill="none" stroke="#222" strokeWidth="1.400" /></svg>
      <span className="ml-[15px] text-[#aaa]">Reset</span>
      <div className="relative ml-[8px] w-[129px] h-[4px] rounded-full bg-[#777]">
        <span className="absolute left-[19px] top-[-6px] w-[16px] h-[16px] rounded-full bg-white border border-[#555]" />
      </div>
      <span className="ml-[10px]">100 %</span>
      <span className="ml-[13px] mr-[6px]">10:40 AM</span>
    </div>
  </div>
);

export default function App() {
  return (
    <div className="relative w-[1555px] h-[870px] overflow-hidden bg-white flex flex-col font-['Open_Sans',sans-serif]">
      <ChromeBar />
      <AddressBar />
      <div className="flex flex-1 min-h-0 border-t border-[#ccc]">
        <LeftPanel />
        <div className="flex-1 min-w-0 flex flex-col font-['Liberation_Sans',Arial,sans-serif]">
          <AppHeader />
          <AppTabs />
          <div className="flex flex-1 min-h-0">
            <Sidebar />
            <div className="flex-1 min-w-0 flex flex-col pl-[12px] pr-[20px] bg-white">
              <Title />
              <Toolbar />
              <Form />
              <Table />
              <Totals />
            </div>
          </div>
        </div>
      </div>
      <Status />
      <Menu />
      <Arrow />
      <Popup />
    </div>
  );
}
